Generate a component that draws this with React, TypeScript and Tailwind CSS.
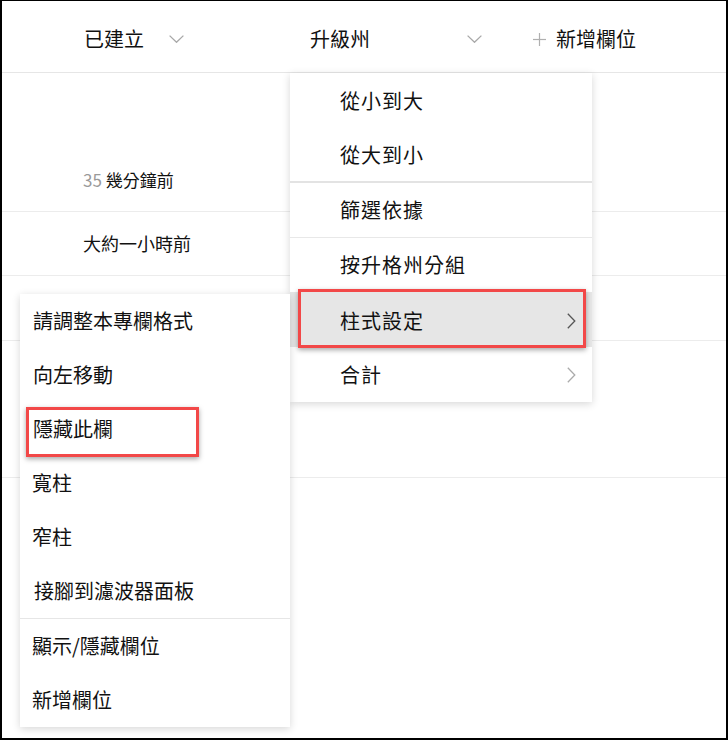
import React from "react";

const font = { fontFamily: '"Noto Sans CJK TC", "Noto Sans", sans-serif' };

function ChevronDown() {
  return (
    <svg width="15" height="8" viewBox="0 0 15 8" className="block">
      <polyline points="0.6,0.6 7.5,7.3 14.4,0.6" fill="none" stroke="#a8a8a8" strokeWidth="1.3" />
    </svg>
  );
}

function ChevronRight({ color }: { color: string }) {
  return (
    <svg width="9" height="16" viewBox="0 0 9 16" className="block">
      <polyline points="0.8,0.8 7.8,8 0.8,15.2" fill="none" stroke={color} strokeWidth="1.3" />
    </svg>
  );
}

function Plus() {
  return (
    <svg width="13" height="13" viewBox="0 0 13 13" className="block">
      <line x1="6.5" y1="0" x2="6.5" y2="13" stroke="#b0b0b0" strokeWidth="1.2" />
      <line x1="0" y1="6.5" x2="13" y2="6.5" stroke="#b0b0b0" strokeWidth="1.2" />
    </svg>
  );
}

export default function App() {
  return (
    <div
      className="relative w-[728px] h-[740px] overflow-hidden bg-white border-t border-l-2 border-r-2 border-b-2 border-black text-[#111]"
      style={font}
    >
      {/* header */}
      <div className="flex h-[72px] items-center border-b border-[#e6e6e6] pt-[5px] text-[20px] leading-[28px]">
        <div className="flex w-[288px] items-center gap-[25px] pl-[82px]">
          <span>已建立</span>
          <ChevronDown />
        </div>
        <div className="flex w-[232px] items-center justify-between pl-[20px] pr-[40px]">
          <span>升級州</span>
          <ChevronDown />
        </div>
        <div className="flex items-center gap-[10px] pl-[11px]">
          <Plus />
          <span>新增欄位</span>
        </div>
      </div>

      {/* rows */}
      <div className="h-[139px] border-b border-[#ececec] pl-[81px] pt-[95px] text-[17px] leading-[24px]">
        <span className="text-[#9a9a9a]">35</span> <span>幾分鐘前</span>
      </div>
      <div className="flex h-[64px] items-center border-b border-[#ececec] pl-[81px] text-[18px]">
        大約一小時前
      </div>
      <div className="h-[65px] border-b border-[#ececec]" />
      <div className="h-[137px] border-b border-[#ececec]" />

      {/* right dropdown menu */}
      <div className="absolute left-[288px] top-[72px] z-10 w-[302px] bg-white text-[20px] tracking-[1px] shadow-[0_2px_8px_rgba(0,0,0,0.16)]">
        <div className="flex h-[55px] items-center pl-[50px]">從小到大</div>
        <div className="flex h-[53px] items-center pl-[50px]">從大到小</div>
        <div className="h-[2px] bg-[#e3e3e3]" />
        <div className="flex h-[54px] items-center pl-[50px]">篩選依據</div>
        <div className="h-px bg-[#e8e8e8]" />
        <div className="flex h-[54px] items-center pl-[50px]">按升格州分組</div>
        <div className="relative flex h-[55px] items-center justify-between bg-[#e6e6e6] pl-[50px] pr-[16px] pt-[3px]">
          <span>柱式設定</span>
          <ChevronRight color="#555555" />
          <div className="absolute left-[8px] top-[-3px] h-[59px] w-[288px] border-[3px] border-[#f24848] shadow-[0_2px_5px_rgba(0,0,0,0.35)]" />
        </div>
        <div className="flex h-[55px] items-center justify-between pl-[50px] pr-[16px]">
          <span>合計</span>
          <ChevronRight color="#ababab" />
        </div>
      </div>

      {/* left submenu */}
      <div className="absolute left-[18px] top-[293px] z-20 w-[270px] bg-white text-[20px] shadow-[0_2px_8px_rgba(0,0,0,0.16)]">
        <div className="flex h-[54px] items-center pl-[13px]">請調整本專欄格式</div>
        <div className="flex h-[54px] items-center pl-[13px]">向左移動</div>
        <div className="relative flex h-[54px] items-center pl-[13px]">
          <span>隱藏此欄</span>
          <div className="absolute left-[6px] top-[5px] h-[50px] w-[173px] border-[3px] border-[#f24848] shadow-[0_2px_5px_rgba(0,0,0,0.35)]" />
        </div>
        <div className="flex h-[54px] items-center pl-[12px]">寬柱</div>
        <div className="flex h-[54px] items-center pl-[12px]">窄柱</div>
        <div className="flex h-[54px] items-center pl-[14px]">接腳到濾波器面板</div>
        <div className="h-px bg-[#e6e6e6]" />
        <div className="flex h-[54px] items-center pl-[12px]">顯示/隱藏欄位</div>
        <div className="flex h-[54px] items-center pl-[12px]">新增欄位</div>
      </div>
    </div>
  );
}
